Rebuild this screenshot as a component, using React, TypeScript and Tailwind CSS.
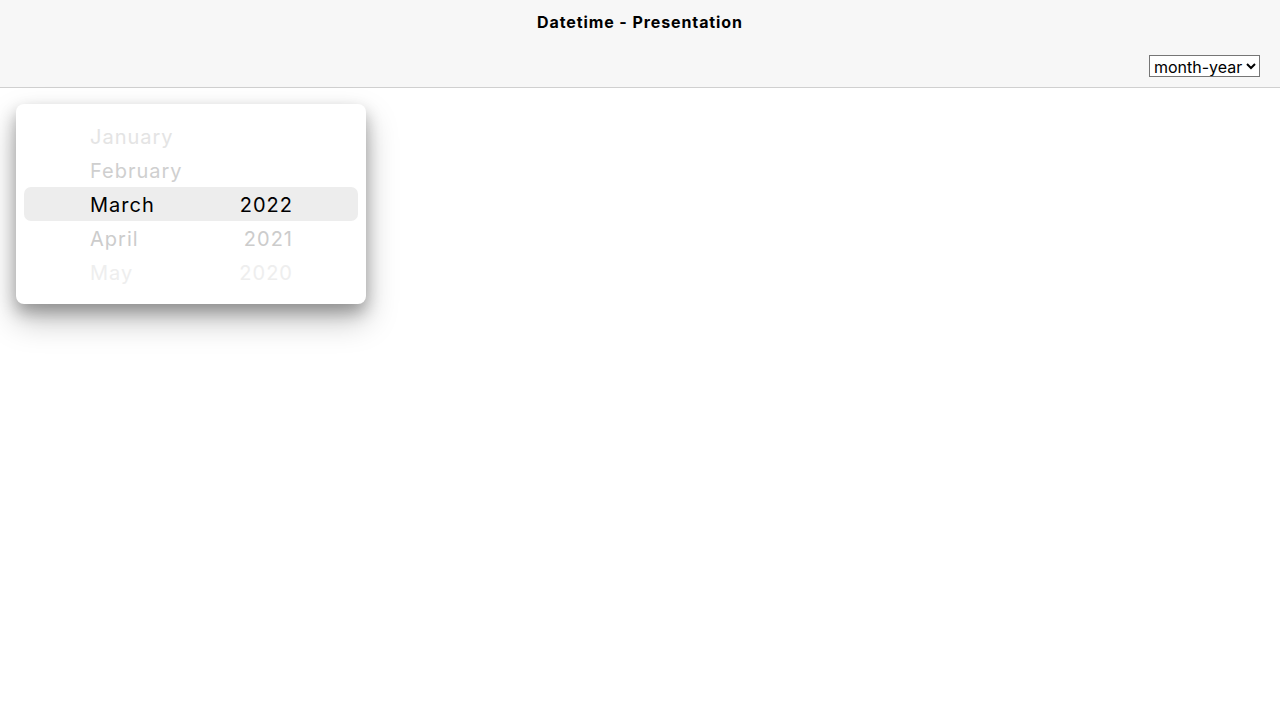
import React from "react";

const months = [
  { label: "January", color: "text-[#e4e4e4]" },
  { label: "February", color: "text-[#cfcfcf]" },
  { label: "March", color: "text-black" },
  { label: "April", color: "text-[#cccccc]" },
  { label: "May", color: "text-[#eeeeee]" },
];

const years = [
  { label: "", color: "" },
  { label: "", color: "" },
  { label: "2022", color: "text-black" },
  { label: "2021", color: "text-[#cccccc]" },
  { label: "2020", color: "text-[#eeeeee]" },
];

export default function App() {
  return (
    <div className="min-h-screen bg-white font-['Inter','Liberation_Sans',sans-serif]">
      {/* Toolbar */}
      <header className="h-[88px] bg-[#f7f7f7] border-b border-[#d0d0d0] flex flex-col">
        <h1 className="text-center text-[16px] font-bold text-black leading-[20px] pt-[12px] tracking-[0.9px]">
          Datetime - Presentation
        </h1>
        <div className="flex justify-end pr-[20px] pt-[23px]">
          <select
            defaultValue="month-year"
            className="h-[22px] border border-[#767676] bg-white text-[16px] leading-[20px] text-black px-0"
          >
            <option value="date-time">date-time</option>
            <option value="time-date">time-date</option>
            <option value="date">date</option>
            <option value="time">time</option>
            <option value="month-year">month-year</option>
            <option value="month">month</option>
            <option value="year">year</option>
          </select>
        </div>
      </header>

      {/* Datetime wheel */}
      <div className="pt-[16px] pl-[16px]">
        <div className="w-[350px] h-[200px] bg-white rounded-[8px] shadow-[0_16px_32px_rgba(0,0,0,0.25),0_8px_16px_rgba(0,0,0,0.28)] py-[15px] px-[8px]">
          <div className="relative">
            <div className="absolute left-0 right-0 top-[68px] h-[34px] rounded-[7px] bg-[#ededed]" />
            <div className="relative flex tracking-[1px] pt-[1px]">
              <div className="flex flex-col pl-[66px] w-[210px]">
                {months.map((m) => (
                  <div key={m.label} className={`h-[34px] leading-[34px] text-[20px] ${m.color}`}>
                    {m.label}
                  </div>
                ))}
              </div>
              <div className="flex flex-col items-end w-[59px]">
                {years.map((y, i) => (
                  <div key={i} className={`h-[34px] leading-[34px] text-[20px] ${y.color}`}>
                    {y.label}
                  </div>
                ))}
              </div>
            </div>
          </div>
        </div>
      </div>
    </div>
  );
}
